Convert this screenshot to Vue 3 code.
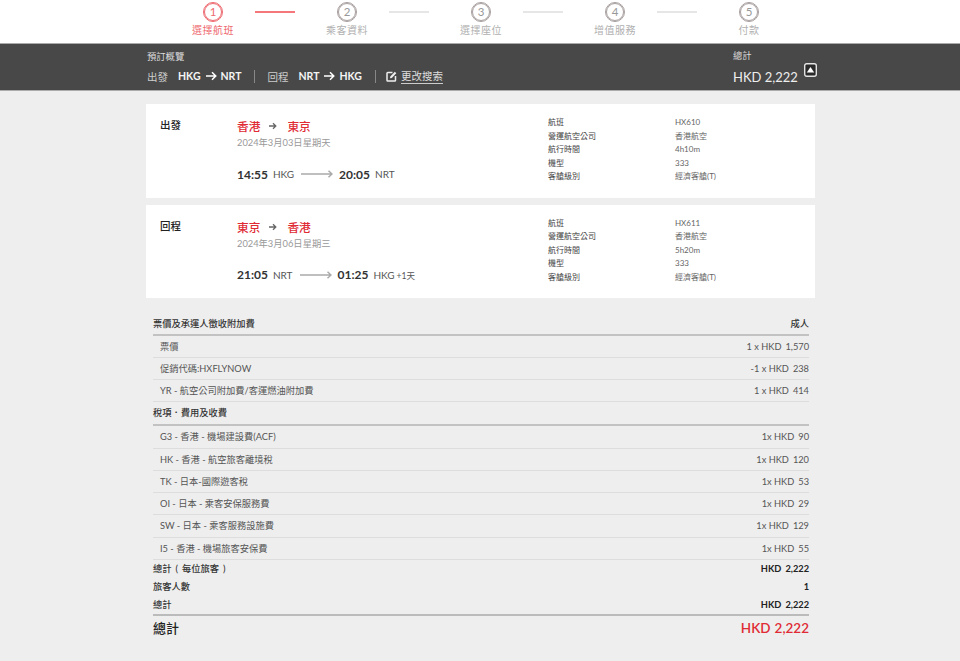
<script setup>
const steps = ['選擇航班', '乘客資料', '選擇座位', '增值服務', '付款']

const flights = [
  {
    title: '出發', from: '香港', to: '東京', date: '2024年3月03日星期天',
    dep: '14:55', depCode: 'HKG', arr: '20:05', arrCode: 'NRT', next: '',
    info: ['HX610', '香港航空', '4h10m', '333', '經濟客艙(T)']
  },
  {
    title: '回程', from: '東京', to: '香港', date: '2024年3月06日星期三',
    dep: '21:05', depCode: 'NRT', arr: '01:25', arrCode: 'HKG', next: '+1天',
    info: ['HX611', '香港航空', '5h20m', '333', '經濟客艙(T)']
  }
]

const infoLabels = ['航班', '營運航空公司', '航行時間', '機型', '客艙級別']

const fares = [
  { name: '票價', qty: '1 x HKD', amount: '1,570' },
  { name: '促銷代碼:HXFLYNOW', qty: '-1 x HKD', amount: '238' },
  { name: 'YR - 航空公司附加費/客運燃油附加費', qty: '1 x HKD', amount: '414' }
]

const taxes = [
  { name: 'G3 - 香港 - 機場建設費(ACF)', qty: '1x HKD', amount: '90' },
  { name: 'HK - 香港 - 航空旅客離境稅', qty: '1x HKD', amount: '120' },
  { name: 'TK - 日本-國際遊客稅', qty: '1x HKD', amount: '53' },
  { name: 'OI - 日本 - 乘客安保服務費', qty: '1x HKD', amount: '29' },
  { name: 'SW - 日本 - 乘客服務設施費', qty: '1x HKD', amount: '129' },
  { name: 'I5 - 香港 - 機場旅客安保費', qty: '1x HKD', amount: '55' }
]
</script>

<template>
  <div class="page">
    <div class="stepper">
      <template v-for="(step, i) in steps" :key="step">
        <div class="step" :class="{ active: i === 0 }">
          <span class="circle">{{ i + 1 }}</span>
          <span class="step-label">{{ step }}</span>
        </div>
        <span v-if="i < steps.length - 1" class="connector" :class="{ done: i === 0 }"></span>
      </template>
    </div>

    <div class="summary-bar">
      <div class="wrap summary-inner">
        <div class="summary-left">
          <div class="summary-title">預訂概覽</div>
          <div class="summary-route">
            <span class="route-label">出發</span>
            <b>HKG</b>
            <svg class="route-arrow" width="11" height="10" viewBox="0 0 11 10"><path d="M0 5h9.500M6 1.200L9.800 5 6 8.800" fill="none" stroke="#fff" stroke-width="1.500"/></svg>
            <b>NRT</b>
            <span class="divider"></span>
            <span class="route-label">回程</span>
            <b>NRT</b>
            <svg class="route-arrow" width="11" height="10" viewBox="0 0 11 10"><path d="M0 5h9.500M6 1.200L9.800 5 6 8.800" fill="none" stroke="#fff" stroke-width="1.500"/></svg>
            <b>HKG</b>
            <span class="divider"></span>
            <svg class="edit-icon" width="11" height="11" viewBox="0 0 11 11">
              <path d="M6.500 1.500H1.800a.8.800 0 0 0-.8.8v6.900c0 .4.400.8.800.8h6.900c.4 0 .8-.4.800-.8V5" fill="none" stroke="#eee" stroke-width="1.500"/>
              <path d="M4 7.200l.3-1.800L8.800.8l1.500 1.500-4.500 4.600z" fill="#eee"/>
            </svg>
            <a class="edit-link">更改搜索</a>
          </div>
        </div>
        <div class="summary-total">
          <div class="summary-title">總計</div>
          <div class="summary-amount">HKD 2,222</div>
        </div>
        <span class="collapse">
          <svg width="13" height="14" viewBox="0 0 13 14">
            <rect x=".7" y=".7" width="11.600" height="12.600" rx="2" fill="#2a2a2a" stroke="#e4e4e4" stroke-width="1.400"/>
            <path d="M2.800 9.500L6.500 4l3.700 5.500z" fill="#fff"/>
          </svg>
        </span>
      </div>
    </div>

    <div class="wrap">
      <div class="cards">
        <div v-for="f in flights" :key="f.title" class="card">
          <div class="card-title">{{ f.title }}</div>
          <div class="card-route">
            <div class="cities">
              <span>{{ f.from }}</span>
              <svg width="8" height="8" viewBox="0 0 8 8"><path d="M0 4h6.500M4 1.300L6.800 4 4 6.700" fill="none" stroke="#666" stroke-width="1.300"/></svg>
              <span class="city-to">{{ f.to }}</span>
            </div>
            <div class="date">{{ f.date }}</div>
            <div class="times">
              <b>{{ f.dep }}</b>
              <span class="code">{{ f.depCode }}</span>
              <svg class="long-arrow" width="32" height="8" viewBox="0 0 32 8"><path d="M0 4h31M27.500 .8L31 4l-3.500 3.200" fill="none" stroke="#aaa" stroke-width="1.500"/></svg>
              <b>{{ f.arr }}</b>
              <span class="code">{{ f.arrCode }}</span>
              <span v-if="f.next" class="next-day">{{ f.next }}</span>
            </div>
          </div>
          <div class="card-info">
            <template v-for="(label, i) in infoLabels" :key="label">
              <span class="info-label">{{ label }}</span>
              <span class="info-value">{{ f.info[i] }}</span>
            </template>
          </div>
        </div>
      </div>

      <div class="fare-table">
        <div class="fare-head first">
          <span>票價及承運人徵收附加費</span>
          <span>成人</span>
        </div>
        <div v-for="r in fares" :key="r.name" class="fare-row">
          <span>{{ r.name }}</span>
          <span class="amount"><span class="qty">{{ r.qty }}</span>{{ r.amount }}</span>
        </div>
        <div class="fare-head">
          <span>稅項．費用及收費</span>
        </div>
        <div v-for="r in taxes" :key="r.name" class="fare-row">
          <span>{{ r.name }}</span>
          <span class="amount"><span class="qty">{{ r.qty }}</span>{{ r.amount }}</span>
        </div>
        <div class="total-row">
          <span>總計 ( 每位旅客 )</span>
          <span class="amount strong"><span class="qty">HKD</span>2,222</span>
        </div>
        <div class="total-row">
          <span>旅客人數</span>
          <span class="amount strong">1</span>
        </div>
        <div class="total-row last">
          <span>總計</span>
          <span class="amount strong"><span class="qty">HKD</span>2,222</span>
        </div>
        <div class="grand-row">
          <span>總計</span>
          <span class="grand-amount"><span class="qty">HKD</span>2,222</span>
        </div>
      </div>
    </div>
  </div>
</template>

<style>
html, body {
  margin: 0;
  background: #eee;
}
</style>

<style scoped>
.page {
  font-family: Lato, "Noto Sans CJK TC", sans-serif;
  color: #333;
  min-height: 661px;
  background: #eee;
  overflow: hidden;
}

.wrap {
  width: 669px;
  margin-left: 146px;
}

.stepper {
  display: flex;
  justify-content: center;
  padding-left: 2px;
  height: 43px;
  background: #fff;
}

.step {
  width: 84px;
  display: flex;
  flex-direction: column;
  align-items: center;
  padding-top: 3px;
  color: #b0b0b0;
}

.circle {
  width: 16px;
  height: 16px;
  border: 1px solid #a89f9f;
  outline: .4px solid #a89f9f;
  border-radius: 50%;
  display: flex;
  align-items: center;
  justify-content: center;
  font-size: 11.500px;
  line-height: 1;
  color: #999;
}

.step-label {
  font-size: 10px;
  line-height: 14px;
  margin-top: 2px;
  letter-spacing: .5px;
  white-space: nowrap;
}

.step.active {
  color: #ee6a70;
}

.step.active .circle {
  border-color: #ee6a70;
  outline-color: #ee6a70;
  color: #ee6a70;
}

.connector {
  width: 40px;
  height: 2px;
  margin: 11px 10px 0 0;
  background: #e6e6e6;
}

.connector.done {
  background: #f5777b;
}

.summary-bar {
  height: 48px;
  background: #484848;
  border-top: 1px solid #aaa;
  border-bottom: 1px solid #aaa;
  box-sizing: border-box;
  color: #ddd;
}

.summary-inner {
  display: flex;
  position: relative;
}

.summary-left {
  flex: 1;
  padding: 6px 0 0 1px;
}

.summary-title {
  font-size: 9.300px;
  line-height: 13px;
  color: #ddd;
}

.summary-route {
  display: flex;
  align-items: center;
  height: 20px;
  margin-top: 3px;
  font-size: 10.500px;
}

.summary-route b {
  color: #f4f4f4;
  font-weight: 700;
  font-size: 10.500px;
}

.route-label {
  margin-right: 10px;
  color: #ccc;
}

.route-arrow {
  margin: 0 4px 0 5px;
}

.divider {
  width: 1px;
  height: 13px;
  background: #888;
  margin: 0 12px 0 13px;
}

.edit-icon {
  margin: 0 4px 0 -2px;
}

.edit-link {
  color: #ddd;
  font-size: 10.500px;
  border-bottom: 1px solid #ccc;
  line-height: 14px;
}

.summary-total {
  width: 82px;
  padding-top: 5px;
}

.summary-amount {
  font-size: 13px;
  line-height: 18px;
  margin-top: 6px;
  color: #eee;
  white-space: nowrap;
}

.collapse {
  position: absolute;
  top: 19px;
  right: -2px;
  display: flex;
}

.cards {
  padding-top: 13px;
  display: flex;
  flex-direction: column;
  gap: 7px;
}

.card {
  background: #fff;
  height: 93.500px;
  display: flex;
  box-sizing: border-box;
  padding-top: 14px;
}

.card-title {
  width: 91px;
  padding-left: 14px;
  box-sizing: border-box;
  font-size: 10.500px;
  line-height: 14px;
  font-weight: 500;
  color: #222;
}

.card-route {
  width: 311px;
}

.cities {
  display: flex;
  align-items: center;
  gap: 9px;
  font-size: 11.700px;
  line-height: 16px;
  font-weight: 500;
  color: #e02b35;
}

.city-to {
  margin-left: 1px;
}

.date {
  margin-top: 2px;
  font-size: 9.300px;
  line-height: 14px;
  color: #999;
}

.times {
  display: flex;
  align-items: center;
  margin-top: 15px;
  height: 18px;
  font-size: 10px;
  color: #555;
}

.times b {
  font-size: 12px;
  font-weight: 700;
  color: #333;
}

.code {
  margin-left: 5px;
}

.long-arrow {
  margin: 0 6px 0 7px;
}

.next-day {
  margin-left: 2px;
  font-size: 8.500px;
}

.card-info {
  display: grid;
  grid-template-columns: 127px 1fr;
  grid-auto-rows: 13.500px;
  align-content: start;
  font-size: 8px;
  line-height: 13px;
  margin-top: -2px;
}

.info-label {
  color: #444;
}

.info-value {
  color: #666;
}

.fare-table {
  margin: 13.500px 6px 0 7px;
  font-size: 9.250px;
  color: #555;
}

.fare-head {
  display: flex;
  justify-content: space-between;
  height: 22px;
  line-height: 22px;
  border-bottom: 2px solid #c2c2c2;
  color: #333;
  font-weight: 500;
}

.fare-head.first {
  line-height: 24px;
}

.fare-row {
  display: flex;
  justify-content: space-between;
  height: 21.250px;
  line-height: 21px;
  padding-left: 7px;
  border-bottom: 1px solid #ddd;
}

.amount {
  display: flex;
  color: #555;
}

.qty {
  margin-right: 4px;
}

.strong {
  color: #222;
  font-weight: 700;
}

.total-row {
  display: flex;
  justify-content: space-between;
  height: 18px;
  line-height: 18px;
  word-spacing: 1.700px;
  color: #333;
  font-weight: 500;
}

.total-row.last {
  line-height: 17px;
  border-bottom: 2px solid #bbb;
}

.grand-row {
  display: flex;
  justify-content: space-between;
  align-items: center;
  height: 24px;
  font-size: 13px;
  font-weight: 500;
  color: #222;
}

.grand-amount {
  display: flex;
  color: #e02b35;
  font-size: 13.500px;
  font-weight: 600;
}
</style>
